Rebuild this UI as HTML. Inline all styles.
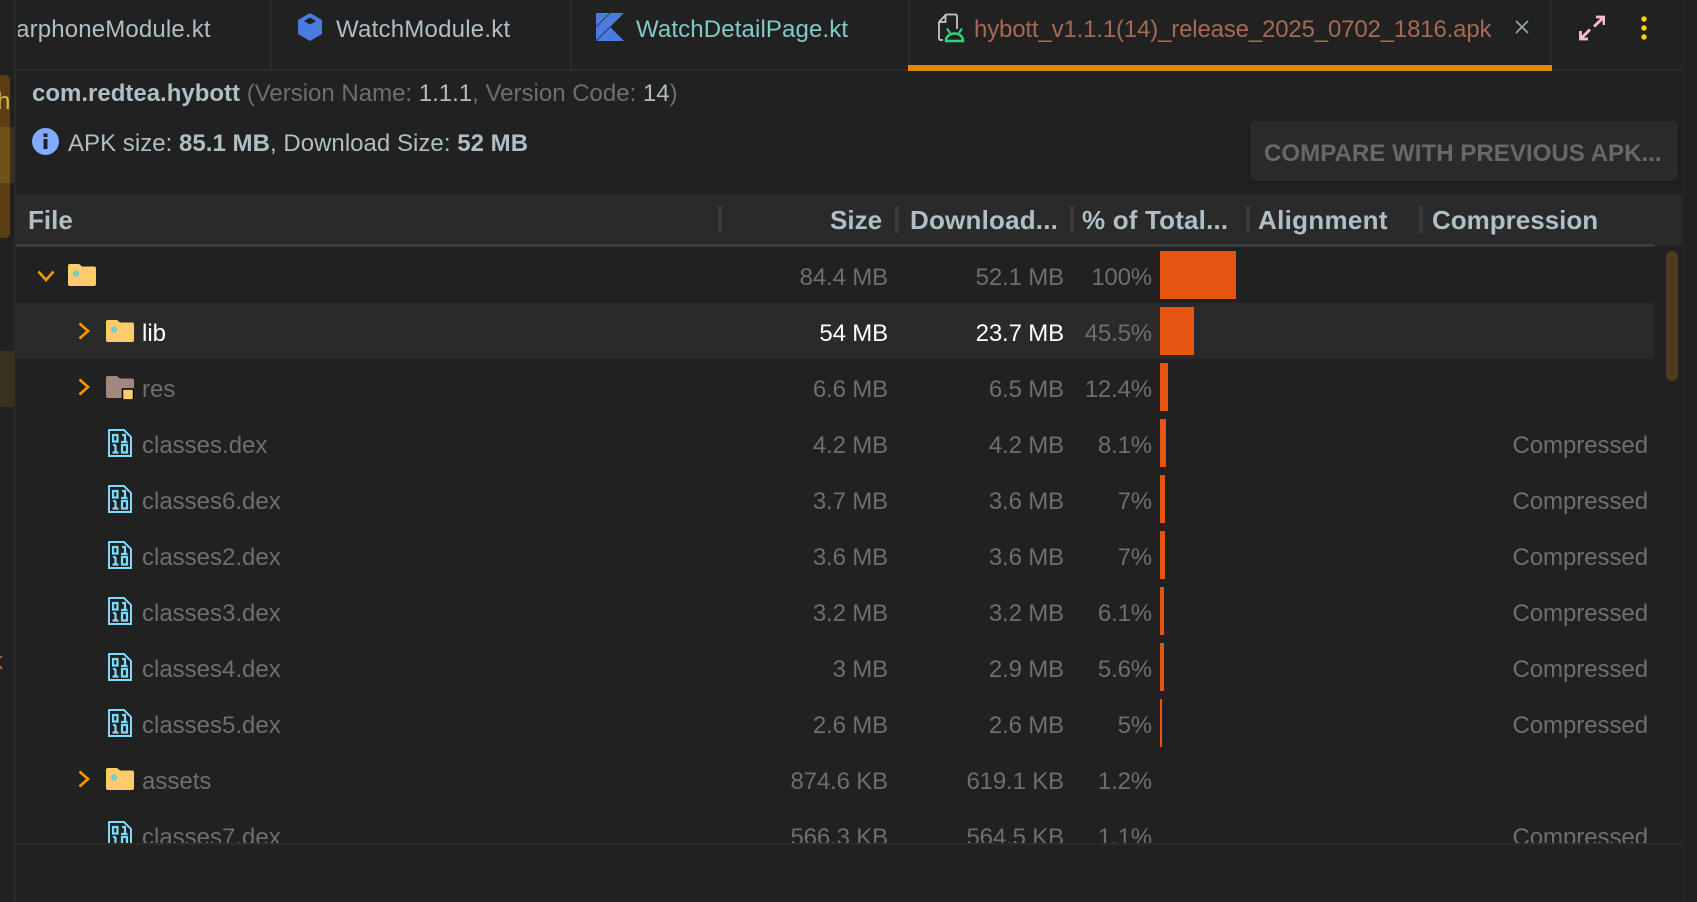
<!DOCTYPE html>
<html><head><meta charset="utf-8"><style>
*{box-sizing:border-box}
html,body{margin:0;padding:0;background:#212121}
body{width:1697px;height:902px;position:relative;overflow:hidden;font:24px/28px "Liberation Sans",sans-serif;color:#6e6e6e}
.a{position:absolute;white-space:nowrap}
.b{font-weight:bold}
.h{position:absolute;top:206px;line-height:28px;font-size:26px;font-weight:bold;color:#b0bec5;white-space:nowrap}
.sep{position:absolute;top:206px;width:4px;height:27px;background:#3a3a3a}
.vd{position:absolute;top:0;width:2px;height:70px;background:#2a2a2a}
#list{position:absolute;left:16px;top:247px;width:1666px;height:596px;overflow:hidden}
.r{position:absolute;left:0;width:1638px;height:56px}
.r span{position:absolute;top:17px;white-space:nowrap;line-height:28px}
.r .n{left:126px}
.r .s{right:766px;letter-spacing:-.15px}
.r .d{right:590px;letter-spacing:-.15px}
.r .p{right:502px;letter-spacing:-.15px}
.r .c{right:6px;letter-spacing:-.05px}
.r i{position:absolute;left:1144px;top:4px;height:48px;background:#e65610}
.r svg{position:absolute}
.hi{background:#2a2a2a}
.hi .n,.hi .s,.hi .d{color:#fff}
</style></head><body>
<svg width="0" height="0" style="position:absolute"><defs>
<symbol id="fo" viewBox="0 0 28 22"><path d="M2 0h8.500a2 2 0 0 1 1.500.7L14 2.500h12a2 2 0 0 1 2 2V20a2 2 0 0 1-2 2H2a2 2 0 0 1-2-2V2a2 2 0 0 1 2-2z" fill="#ffcb6b"/><circle cx="8" cy="9.500" r="3.300" fill="#80cbc4"/></symbol>
<symbol id="dx" viewBox="0 0 24 28"><path d="M1 1h15l7 7v19H1z" fill="none" stroke="#80d8ff" stroke-width="2"/><path d="M5 6h4.500v6.500H5zM14 6h3v7M13 13h6.500M7.500 16v7.500M4.500 23.500h6M5 16h2.500M14 16h5v7.500h-5z" fill="none" stroke="#80d8ff" stroke-width="2.200"/></symbol>
<symbol id="cr" viewBox="0 0 12 18"><path d="M1.500 1.500 10 9 1.500 16.500" fill="none" stroke="#ff9800" stroke-width="2.600"/></symbol>
</defs></svg>

<!-- left gutter -->
<div class="a" style="left:0;top:75px;width:10px;height:163px;background:#5a3f14;border-radius:0 5px 5px 0"></div>
<div class="a" style="left:0;top:127px;width:14px;height:56px;background:#3a3220"></div>
<div class="a" style="left:0;top:127px;width:10px;height:56px;background:#6e5216"></div>
<div class="a" style="left:0;top:351px;width:14px;height:56px;background:#393120"></div>
<div class="a" style="left:0;top:88px;color:#d8b84c;width:10px;overflow:hidden;text-indent:-3px">h</div>
<div class="a" style="left:0;top:648px;color:#a06a4a;width:4px;overflow:hidden;text-indent:-9px">k</div>
<div class="a" style="left:14px;top:0;width:2px;height:902px;background:#2a2a2a"></div>

<!-- tabs -->
<div class="a" style="left:16px;top:69px;width:1666px;height:2px;background:#2a2a2a"></div>
<div class="vd" style="left:270px"></div><div class="vd" style="left:570px"></div><div class="vd" style="left:908px"></div><div class="vd" style="left:1550px"></div>
<div class="a" style="left:908px;top:65px;width:644px;height:6px;background:#e08600"></div>
<div class="a" style="left:1682px;top:0;width:2px;height:902px;background:#262626"></div>
<div class="a" style="left:18px;top:15px;width:248px;height:30px;overflow:hidden;color:#b0bec5;line-height:30px;letter-spacing:.15px"><span style="position:absolute;left:-18px">EarphoneModule.kt</span></div>
<svg class="a" style="left:297px;top:13px" width="26" height="28" viewBox="0 0 26 28"><path d="M13 0 25 7v14l-12 7-12-7V7z" fill="#4a7be0"/><path d="M13 4.500 19 8 13 11.500 7 8z" fill="#212121"/></svg>
<div class="a" style="left:336px;top:15px;color:#b0bec5;line-height:30px;letter-spacing:.23px">WatchModule.kt</div>
<svg class="a" style="left:596px;top:13px" width="28" height="28" viewBox="0 0 28 28"><path d="M0 0h28L14 14l14 14H0z" fill="#4a7be0"/><path d="M0 14 14 0M0 28 14 14" stroke="#212121" stroke-width=".7"/></svg>
<div class="a" style="left:636px;top:15px;color:#80cbc4;line-height:30px;letter-spacing:.13px">WatchDetailPage.kt</div>
<svg class="a" style="left:937px;top:13px" width="28" height="30" viewBox="0 0 28 30"><path d="M6 27H3.500A1.500 1.500 0 0 1 2 25.500V9L9 1.500h9.500A1.500 1.500 0 0 1 20 3V16M8.500 2.500V9H2.500" fill="none" stroke="#c8c8c8" stroke-width="1.800"/><path d="M9 28c0-10 17-10 17 0z" fill="none" stroke="#2ed47a" stroke-width="2.500"/><path d="M10 15.500l3 4.500M25 15.500l-3 4.500" stroke="#2ed47a" stroke-width="2.200"/></svg>
<div class="a" style="left:974px;top:15px;color:#a66a52;line-height:30px;letter-spacing:-.16px">hybott_v1.1.1(14)_release_2025_0702_1816.apk</div>
<svg class="a" style="left:1515px;top:20px" width="14" height="14" viewBox="0 0 14 14"><path d="M1 1l12 12M13 1 1 13" stroke="#90a4ae" stroke-width="1.800"/></svg>
<svg class="a" style="left:1579px;top:15px" width="26" height="26" viewBox="0 0 26 26"><path d="M17 2h8v8M24.500 2.500 15 11.500M9 24H1.500V16M2 23.500 11 14.500" fill="none" stroke="#f8bbd9" stroke-width="2.800"/></svg>
<svg class="a" style="left:1640px;top:16px" width="8" height="24" viewBox="0 0 8 24"><circle cx="4" cy="3" r="2.700" fill="#ffd600"/><circle cx="4" cy="12" r="2.700" fill="#ffd600"/><circle cx="4" cy="21" r="2.700" fill="#ffd600"/></svg>

<!-- info -->
<div class="a" style="left:32px;top:80px"><span class="b" style="color:#b0bec5">com.redtea.hybott</span> (Version Name: <span style="color:#b0bec5">1.1.1</span>, Version Code: <span style="color:#b0bec5">14</span>)</div>
<svg class="a" style="left:32px;top:128px" width="27" height="27" viewBox="0 0 27 27"><circle cx="13.500" cy="13.500" r="13.500" fill="#82aaff"/><rect x="11.500" y="5.500" width="4" height="3.500" fill="#212121"/><rect x="11.500" y="11" width="4" height="10" fill="#212121"/></svg>
<div class="a" style="left:68px;top:130px;color:#b0bec5;letter-spacing:.03px">APK size: <b>85.1 MB</b>, Download Size: <b>52 MB</b></div>
<div class="a b" style="left:1250px;top:121px;width:428px;height:60px;background:#2a2a2a;border-radius:6px;box-shadow:0 1px 3px rgba(0,0,0,.3);color:#686868;line-height:60px;padding:3px 0 0 14px;font-size:24.100px">COMPARE WITH PREVIOUS APK...</div>

<!-- header -->
<div class="a" style="left:16px;top:195px;width:1666px;height:50px;background:#2a2a2a"></div>
<div class="a" style="left:16px;top:244px;width:1639px;height:3px;background:#3c3c3c"></div>
<div class="h" style="left:28px">File</div>
<div class="h" style="left:830px">Size</div>
<div class="h" style="left:910px;letter-spacing:.2px">Download...</div>
<div class="h" style="left:1082px;letter-spacing:.18px">% of Total...</div>
<div class="h" style="left:1258px;letter-spacing:.3px">Alignment</div>
<div class="h" style="left:1432px">Compression</div>
<div class="sep" style="left:718px"></div><div class="sep" style="left:895px"></div><div class="sep" style="left:1070px"></div><div class="sep" style="left:1246px"></div><div class="sep" style="left:1419px"></div>

<!-- scrollbar -->
<div class="a" style="left:1666px;top:251px;width:12px;height:130px;border-radius:6px;background:#4f3c1e"></div>

<div id="list">
<div class="r" style="top:0"><svg style="left:21px;top:23px" width="18" height="12" viewBox="0 0 18 12"><path d="M1.500 1.500 9 10l7.500-8.500" fill="none" stroke="#ff9800" stroke-width="2.600"/></svg><svg style="left:52px;top:17px" width="28" height="22"><use href="#fo"/></svg><span class="s">84.4 MB</span><span class="d">52.1 MB</span><span class="p">100%</span><i style="width:76px"></i></div>
<div class="r hi" style="top:56px"><svg style="left:62px;top:19px" width="12" height="18"><use href="#cr"/></svg><svg style="left:90px;top:17px" width="28" height="22"><use href="#fo"/></svg><span class="n">lib</span><span class="s">54 MB</span><span class="d">23.7 MB</span><span class="p" style="color:#6e6e6e">45.5%</span><i style="width:34px"></i></div>
<div class="r" style="top:112px"><svg style="left:62px;top:19px" width="12" height="18"><use href="#cr"/></svg><svg style="left:90px;top:17px" width="28" height="24" viewBox="0 0 28 24"><path d="M2 0h8.500a2 2 0 0 1 1.500.7L14 2.500h12a2 2 0 0 1 2 2V20a2 2 0 0 1-2 2H2a2 2 0 0 1-2-2V2a2 2 0 0 1 2-2z" fill="#a1887f"/><rect x="16.500" y="13" width="11" height="11" fill="#ffcb6b" stroke="#000" stroke-width="1.500"/></svg><span class="n">res</span><span class="s">6.6 MB</span><span class="d">6.5 MB</span><span class="p">12.4%</span><i style="width:8px"></i></div>
<div class="r" style="top:168px"><svg style="left:92px;top:14px" width="24" height="28"><use href="#dx"/></svg><span class="n">classes.dex</span><span class="s">4.2 MB</span><span class="d">4.2 MB</span><span class="p">8.1%</span><i style="width:6px"></i><span class="c">Compressed</span></div>
<div class="r" style="top:224px"><svg style="left:92px;top:14px" width="24" height="28"><use href="#dx"/></svg><span class="n">classes6.dex</span><span class="s">3.7 MB</span><span class="d">3.6 MB</span><span class="p">7%</span><i style="width:5px"></i><span class="c">Compressed</span></div>
<div class="r" style="top:280px"><svg style="left:92px;top:14px" width="24" height="28"><use href="#dx"/></svg><span class="n">classes2.dex</span><span class="s">3.6 MB</span><span class="d">3.6 MB</span><span class="p">7%</span><i style="width:5px"></i><span class="c">Compressed</span></div>
<div class="r" style="top:336px"><svg style="left:92px;top:14px" width="24" height="28"><use href="#dx"/></svg><span class="n">classes3.dex</span><span class="s">3.2 MB</span><span class="d">3.2 MB</span><span class="p">6.1%</span><i style="width:4px"></i><span class="c">Compressed</span></div>
<div class="r" style="top:392px"><svg style="left:92px;top:14px" width="24" height="28"><use href="#dx"/></svg><span class="n">classes4.dex</span><span class="s">3 MB</span><span class="d">2.9 MB</span><span class="p">5.6%</span><i style="width:4px"></i><span class="c">Compressed</span></div>
<div class="r" style="top:448px"><svg style="left:92px;top:14px" width="24" height="28"><use href="#dx"/></svg><span class="n">classes5.dex</span><span class="s">2.6 MB</span><span class="d">2.6 MB</span><span class="p">5%</span><i style="width:2px"></i><span class="c">Compressed</span></div>
<div class="r" style="top:504px"><svg style="left:62px;top:19px" width="12" height="18"><use href="#cr"/></svg><svg style="left:90px;top:17px" width="28" height="22"><use href="#fo"/></svg><span class="n">assets</span><span class="s">874.6 KB</span><span class="d">619.1 KB</span><span class="p">1.2%</span></div>
<div class="r" style="top:560px"><svg style="left:92px;top:14px" width="24" height="28"><use href="#dx"/></svg><span class="n">classes7.dex</span><span class="s">566.3 KB</span><span class="d">564.5 KB</span><span class="p">1.1%</span><span class="c">Compressed</span></div>
</div>
<div class="a" style="left:16px;top:843px;width:1666px;height:2px;background:#2a2a2a"></div>
</body></html>
